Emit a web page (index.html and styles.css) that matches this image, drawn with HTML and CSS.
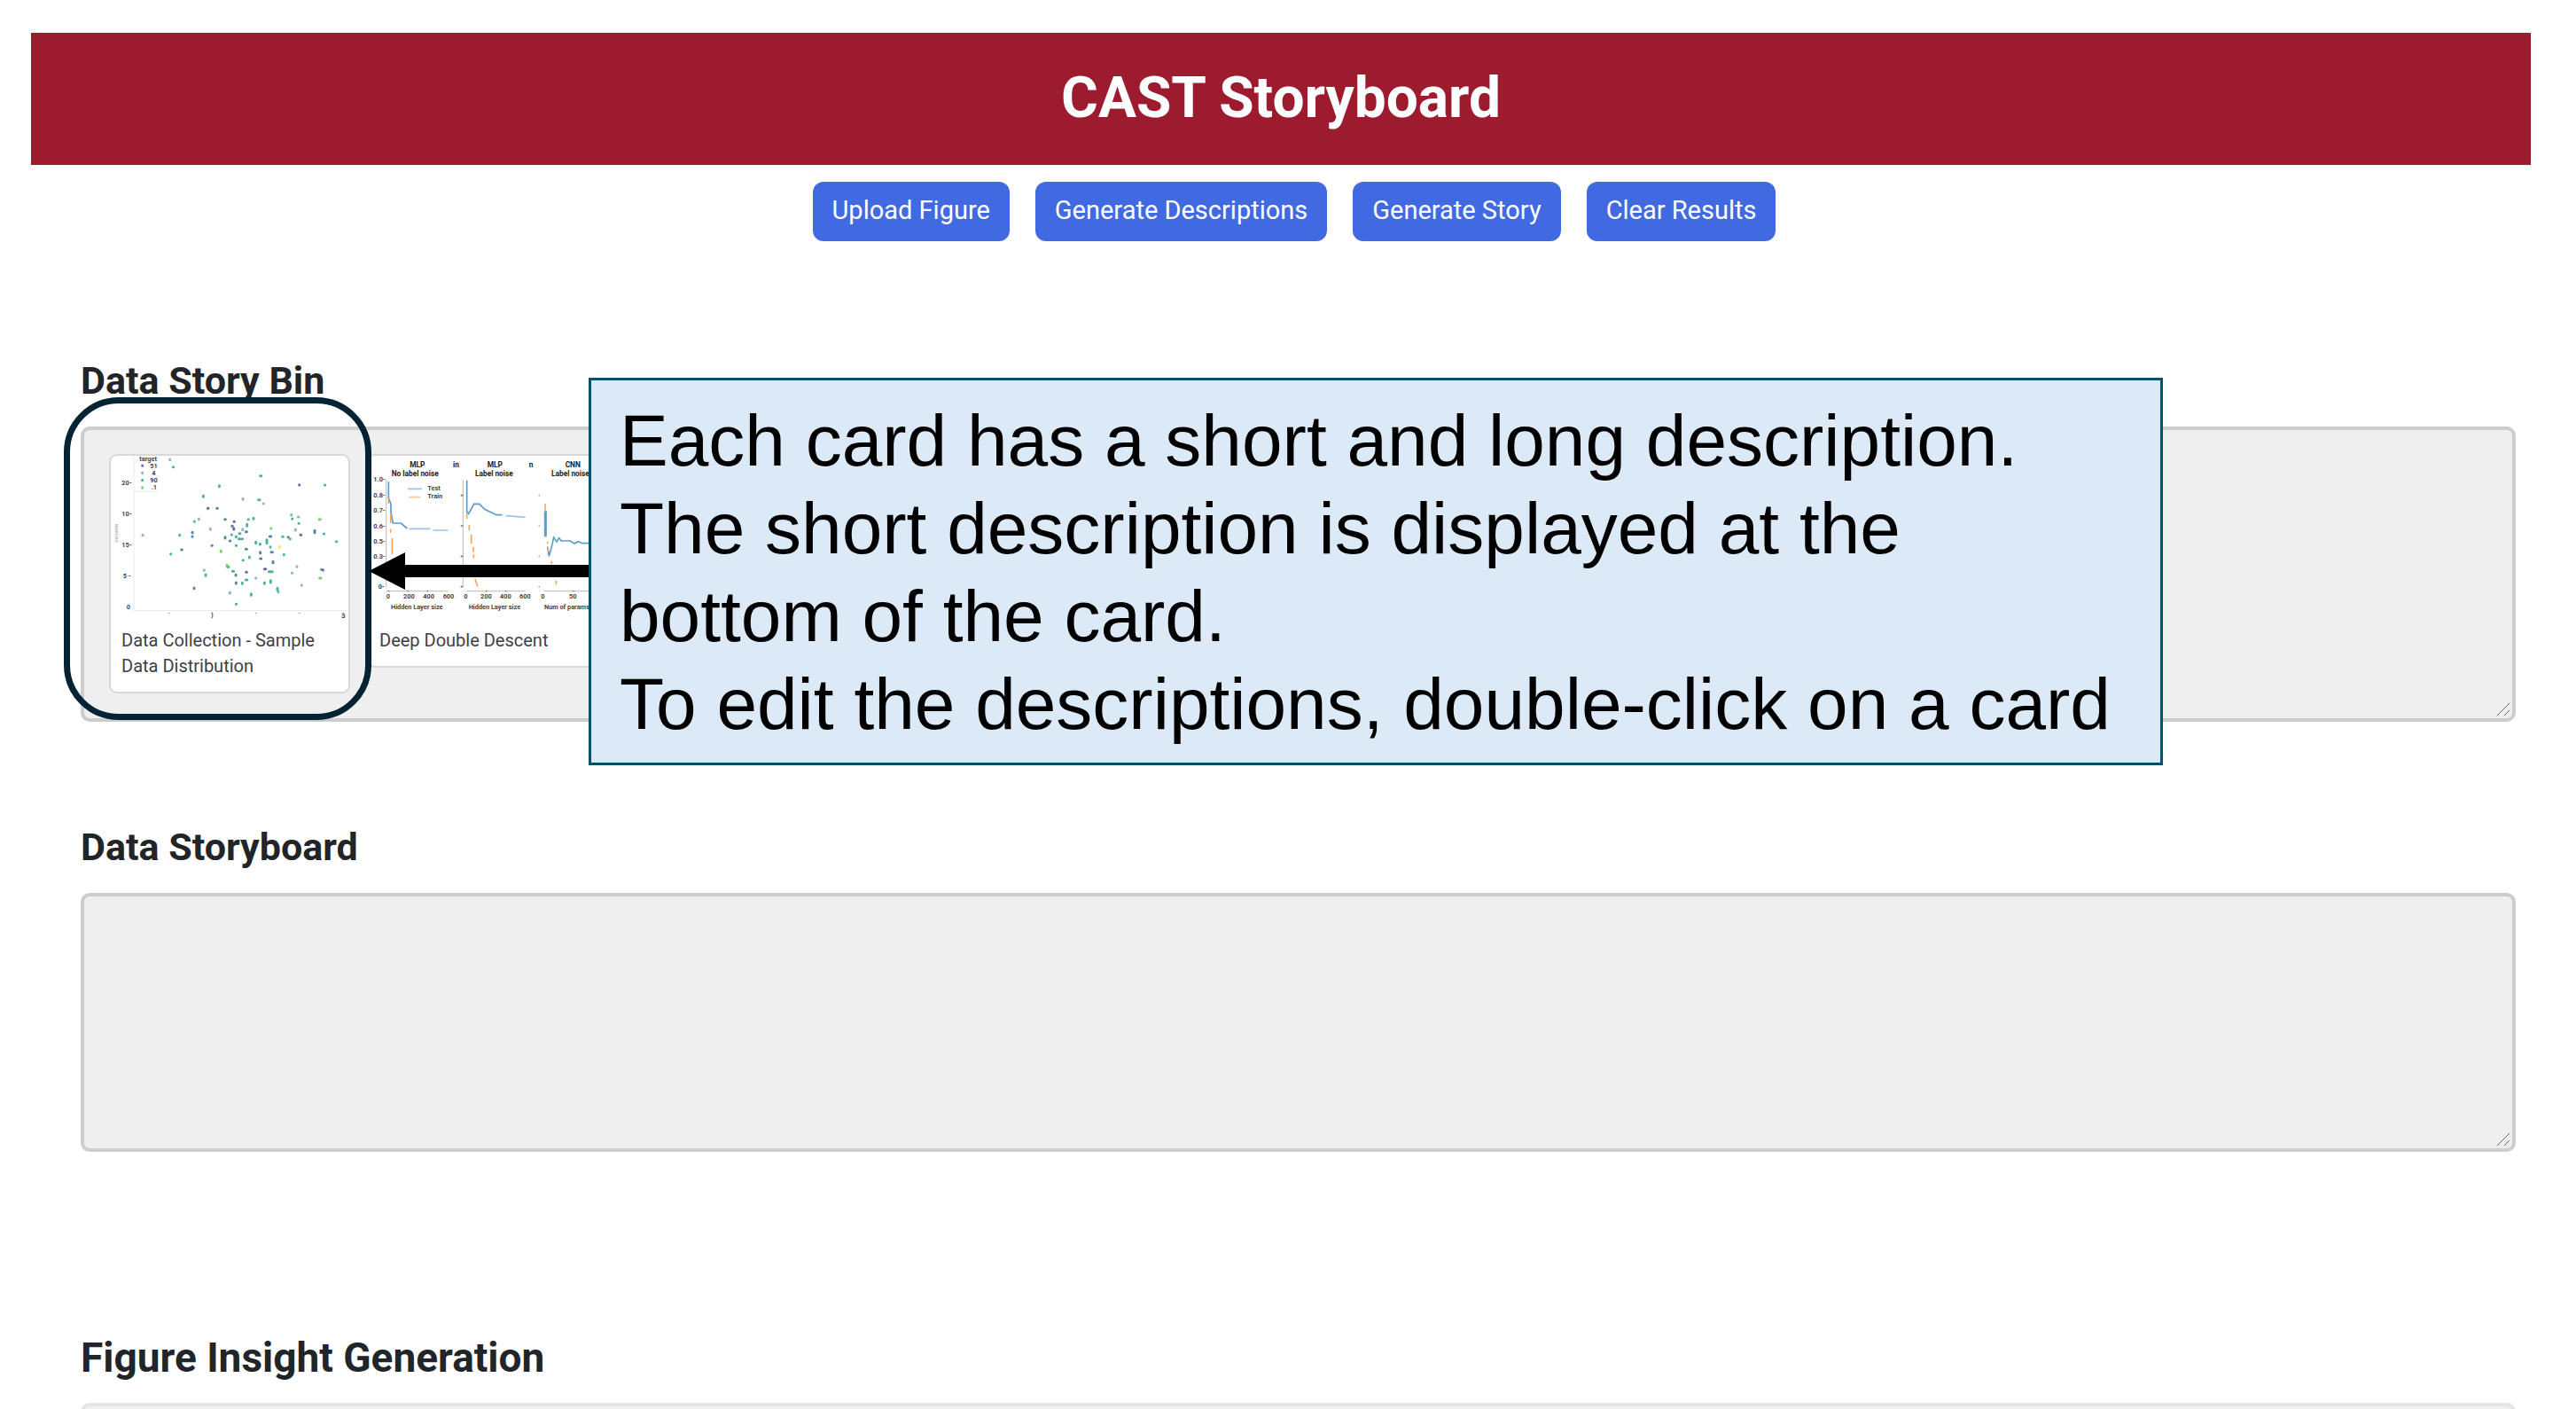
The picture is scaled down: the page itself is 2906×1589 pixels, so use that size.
FILE: index.html
```html
<!DOCTYPE html>
<html lang="en">
<head>
<meta charset="utf-8">
<title>CAST Storyboard</title>
<link rel="stylesheet" href="styles.css">
</head>
<body>
<div class="page">
  <header class="banner"><h1>CAST Storyboard</h1></header>

  <nav class="toolbar" aria-label="Story actions">
    <button type="button" class="btn">Upload Figure</button>
    <button type="button" class="btn">Generate Descriptions</button>
    <button type="button" class="btn">Generate Story</button>
    <button type="button" class="btn">Clear Results</button>
  </nav>

  <main class="sections">
    <section class="section">
      <h2>Data Story Bin</h2>
      <div class="panel bin">
        <article class="card">
          <svg class="figure" viewBox="45 42 804 558" role="img" aria-label="Scatter plot of sample data">
            <path class="frame" d="M123 42V566H847M123 162H205"/>
            <g class="tick">
              <text x="142" y="60">target</text><text x="178" y="83">51</text><text x="184" y="108">4</text><text x="178" y="132">90</text><text x="182" y="156">.1</text>
              <text x="82" y="140">20-</text><text x="82" y="245">10-</text><text x="82" y="350">15-</text><text x="86" y="457">5 -</text><text x="98" y="562">0</text>
              <text x="384" y="588">)</text><text x="826" y="592">3</text>
            </g>
            <text class="faint" transform="translate(68 335) rotate(-90)">variable</text>
            <path class="dots blue" d="M245 54v2M152 99v2M492 187v3M561 204h1M343 255v2M382 289v3M153 310v1M491 290v3M679 249h2M656 241v2M670 291v3M675 416v2M691 480v1M536 455v1M612 501v3M361 428v2M448 504v3"/>
            <path class="dots teal" d="M256 80h1M551 110h3M358 177v4M412 143v3M545 191h4M278 310v1M328 264v1M248 374v1M454 309v1M469 315v2M480 305h3M478 323h4M489 323h2M469 346h1M510 257h1M528 253v3M506 274v6M536 334v4M550 340v2M573 326v12M585 350v1M626 316h2M651 323h1M659 255v1M681 271h1M631 376v1M514 384v3M457 433h4M366 444v4M502 462h4M490 472v3M520 509v5M469 544h1M565 471v4M586 464v7M580 434h12M609 490v6M808 332h1M769 141h1M766 306h1M757 427h1M440 418h4M492 395h1M152 124v1"/>
            <path class="dots navy" d="M404 220h2M431 257h2M455 280h2M321 301v2M284 360h2M321 315v1M387 346h1M432 317v4M448 330h1M502 299h3M583 315h4M645 317h1M735 295v7M551 368v3M588 368h4M551 390h3M594 400v4M468 445v2M469 471v3M502 358h3M327 489v2"/>
            <path class="dots purple" d="M373 220h2M462 265h1M461 287v4M683 140v1M687 310h2M565 425h4M503 436h2M763 428v1M152 75v1"/>
            <path class="dots green" d="M587 287v1M418 363v4M438 412v2M751 257h3M752 456h4M658 439h1M152 149v2M441 417v1"/>
            <path class="dots yellow" d="M616 349v3"/>
            <path class="marks" d="M242 573v2M388 573v2M536 573v2M683 573v2M831 573v2"/>
          </svg>
          <p class="caption">Data Collection - Sample Data Distribution</p>
        </article>
        <article class="card">
          <svg class="figure" viewBox="48 72 804 558" role="img" aria-label="Line charts of deep double descent">
            <g class="heading">
              <text x="187" y="111">MLP</text><text x="333" y="111">in</text><text x="449" y="111">MLP</text><text x="590" y="111">n</text><text x="713" y="111">CNN</text>
              <text x="125" y="141">No label noise</text><text x="408" y="141">Label noise</text><text x="666" y="141">Label noise</text>
            </g>
            <g class="tick">
              <text x="64" y="160">1.0-</text><text x="64" y="214">0.8-</text><text x="64" y="264">0.7-</text><text x="64" y="318">0.6-</text><text x="64" y="368">0.5-</text><text x="64" y="420">0.3-</text><text x="80" y="522">0-</text>
              <text x="247" y="190">Test</text><text x="247" y="216">Train</text>
              <text x="107" y="556">0</text><text x="165" y="556">200</text><text x="232" y="556">400</text><text x="299" y="556">600</text>
              <text x="370" y="556">0</text><text x="426" y="556">200</text><text x="492" y="556">400</text><text x="558" y="556">600</text>
              <text x="631" y="556">0</text><text x="726" y="556">50</text>
              <text x="123" y="591">Hidden Layer size</text><text x="386" y="591">Hidden Layer size</text><text x="642" y="591">Num of params</text>
            </g>
            <path class="axis" d="M107 152V516M106 530H317M367 152V516M379 530H578M640 530H850"/>
            <path class="marks" d="M359 206h8M359 309h8M359 412h8M359 515h8M623 206h3M623 309h3M623 412h3M623 515h3M115 528v4M181 528v4M247 528v4M446 528v4M512 528v4M740 528v4"/>
            <path class="curve test" d="M115 160V215L123 235V262L130 300H157L178 318"/>
            <path class="curve test soft" d="M184 319H256M266 324H316M180 184H228"/>
            <path class="curve test" d="M380 155V262L386 268L404 235H422L440 253L480 272H500"/>
            <path class="curve test soft" d="M512 275L540 277L578 280"/>
            <path class="curve test wide" d="M646 258V346"/>
            <path class="curve test" d="M653 380L658 412L668 376L674 348L684 363L692 350L700 360H730L744 369L757 362L770 368H850"/>
            <path class="curve train" d="M115 216V234M122 268V300M122 320V332M127 350V405M130 420V440M380 268V285M388 306V325M395 338V370M402 380V398M403 405V418M408 488L412 502L417 514M645 235V262M653 362V370M655 385V396M667 428V438M682 494V508"/>
            <path class="curve train soft" d="M184 212H222"/>
          </svg>
          <p class="caption">Deep Double Descent</p>
        </article>
        <svg class="grip" viewBox="0 0 16 16" aria-hidden="true"><path d="M1 15L15 1M9 15L15 9"/></svg>

        <div class="highlight"></div>
        <svg class="arrow" viewBox="0 0 249 42" aria-hidden="true"><path d="M0 21L41 0V14H249V28H41V42Z"/></svg>
        <aside class="callout">
          <p>Each card has a short and long description.<br>The short description is displayed at the<br>bottom of the card.</p>
          <p>To edit the descriptions, double-click on a card</p>
        </aside>
      </div>
    </section>

    <section class="section board-section">
      <h2>Data Storyboard</h2>
      <div class="panel board">
        <svg class="grip" viewBox="0 0 16 16" aria-hidden="true"><path d="M1 15L15 1M9 15L15 9"/></svg>
      </div>
    </section>

    <section class="section insight-section">
      <h2>Figure Insight Generation</h2>
      <div class="panel board insight"></div>
    </section>
  </main>
</div>
</body>
</html>
```
FILE: styles.css
```css
* { box-sizing: border-box; }

body {
  margin: 0;
  background: #fff;
  color: #212529;
  font-family: Roboto, "Liberation Sans", sans-serif;
}

h1, h2, p { margin: 0; }

.page {
  height: 100vh;
  overflow: hidden;
  padding: 37px 51px 0 35px;
}

.banner {
  padding: 37px 0 39px;
  background: #9d1b2f;
  color: #fff;
  text-align: center;
}

.banner h1 {
  font-size: 64px;
  line-height: 73px;
  font-weight: 700;
}

.toolbar {
  display: flex;
  justify-content: center;
  gap: 29px;
  margin-top: 19px;
  padding-left: 30px;
}

.btn {
  padding: 15px 22px 17px;
  border: 0;
  border-radius: 12px;
  background: #4169e1;
  color: #fff;
  font: 400 29px/35px Roboto, "Liberation Sans", sans-serif;
}

.sections { padding: 132px 17px 0 56px; }

.section h2 {
  margin-bottom: 27px;
  font-size: 43px;
  line-height: 50px;
  font-weight: 700;
}

.board-section { margin-top: 116px; }
.insight-section { margin-top: 207px; }

.insight-section h2 {
  margin-bottom: 26px;
  font-size: 46px;
}

.panel {
  position: relative;
  border: 4px solid #cdcdcd;
  border-radius: 10px;
  background: #efefef;
}

.bin {
  display: flex;
  align-items: flex-start;
  gap: 19px;
  min-height: 333px;
  padding: 27px 28px;
}

.board { min-height: 292px; }
.insight { border-color: #e5e5e5; }

.card {
  width: 272px;
  overflow: hidden;
  border: 2px solid #d8d8d8;
  border-radius: 9px;
  background: #fff;
}

.figure {
  display: block;
  width: 100%;
}

.caption {
  padding: 8px 12px 14px;
  color: #3c4146;
  font-size: 20px;
  line-height: 29px;
}

.grip {
  position: absolute;
  right: 2px;
  bottom: 2px;
  width: 16px;
  height: 16px;
  fill: none;
  stroke: #666;
  stroke-width: 1;
}

/* Chart drawing */
.figure path { fill: none; }
.tick { font-size: 22px; font-weight: 700; fill: #444; }
.heading { font-size: 25px; font-weight: 700; fill: #222; }
.faint { font-size: 18px; fill: #999; }
.frame { stroke: #eaeaea; stroke-width: 3; }
.axis { stroke: #bbb; stroke-width: 3; }
.marks { stroke: #777; stroke-width: 5; }
.dots { stroke-width: 9; stroke-linecap: round; opacity: .85; }
.blue { stroke: #7fa9bd; }
.teal { stroke: #35a58c; }
.navy { stroke: #3d6e94; }
.purple { stroke: #59499a; }
.green { stroke: #62cc5a; }
.yellow { stroke: #f3e34b; }
.curve { stroke-width: 5; }
.test { stroke: #5c9dcb; }
.train { stroke: #fba45e; }
.soft { opacity: .6; }
.wide { stroke-width: 9; }

/* Tutorial annotations floating over the bin */
.highlight {
  position: absolute;
  top: -37px;
  left: -23px;
  width: 347px;
  height: 364px;
  border: 7px solid #042433;
  border-radius: 62px;
}

.arrow {
  position: absolute;
  top: 138px;
  left: 321px;
  width: 249px;
  height: 42px;
}

.callout {
  position: absolute;
  top: -59px;
  left: 569px;
  width: 1776px;
  padding: 18px 32px 17px;
  border: 3px solid #06506b;
  background: #dceaf7;
  color: #000;
  font: 400 82px/99px "Liberation Sans", Arial, sans-serif;
  white-space: nowrap;
}
```
